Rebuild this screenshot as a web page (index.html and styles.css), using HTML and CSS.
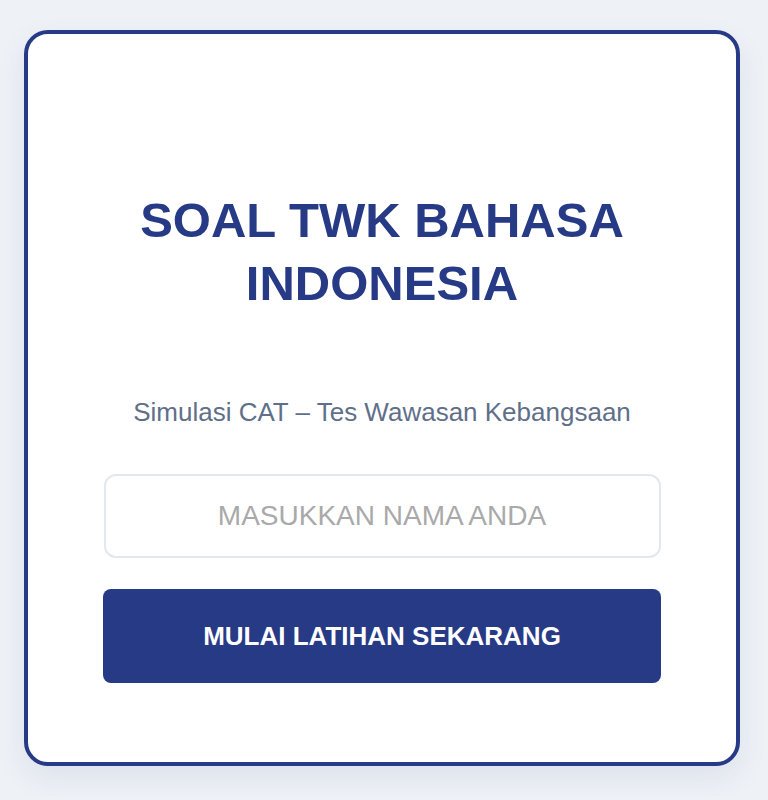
FILE: index.html
```html
<!DOCTYPE html>
<html lang="id">
<head>
  <meta charset="UTF-8" />
  <meta name="viewport" content="width=device-width, initial-scale=1.0" />
  <title>Soal TWK Bahasa Indonesia</title>
  <link rel="stylesheet" href="styles.css">
</head>
<body>
  <div class="card">
    <h1>SOAL TWK BAHASA INDONESIA</h1>
    <p class="subtitle">Simulasi CAT – Tes Wawasan Kebangsaan</p>
    <input type="text" id="nama" class="name-input" placeholder="MASUKKAN NAMA ANDA" />
    <button class="start-btn" id="startBtn">MULAI LATIHAN SEKARANG</button>
  </div>
</body>
</html>
```

FILE: styles.css
```css
body {
  font-family: 'Liberation Sans', Arial, sans-serif;
  background: #eef1f6;
  margin: 0;
  padding: 30px 28px 30px 24px;
}
.card {
  box-sizing: border-box;
  width: 716px;
  height: 736px;
  background: #fff;
  border: 4px solid #273a86;
  border-radius: 24px;
  box-shadow: 0 12px 30px rgba(30, 50, 110, 0.08);
  padding: 155px 76px 0;
  display: flex;
  flex-direction: column;
  align-items: center;
}
h1 {
  margin: 0;
  font-size: 49px;
  line-height: 63px;
  font-weight: bold;
  color: #273a86;
  text-align: center;
  max-width: 520px;
}
.subtitle {
  margin: 82px 0 0;
  font-size: 26px;
  line-height: 30px;
  color: #5f6f8a;
  text-align: center;
}
.name-input {
  box-sizing: border-box;
  width: 557px;
  height: 84px;
  margin-top: 47px;
  border: 2px solid #e2e8f0;
  border-radius: 12px;
  font-family: 'Liberation Sans', Arial, sans-serif;
  font-size: 28px;
  text-align: center;
  color: #333;
  outline: none;
}
.name-input::placeholder {
  color: #a9a9a9;
}
.start-btn {
  width: 558px;
  height: 94px;
  margin-top: 31px;
  background: #273a86;
  color: #fff;
  border: none;
  border-radius: 8px;
  font-family: 'Liberation Sans', Arial, sans-serif;
  font-size: 26px;
  font-weight: bold;
  cursor: pointer;
}
```
